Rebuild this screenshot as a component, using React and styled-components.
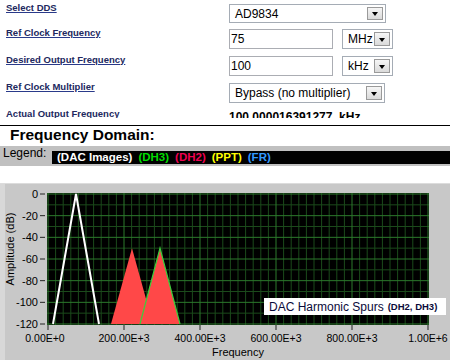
import React from "react";
import styled, { createGlobalStyle } from "styled-components";

const Global = createGlobalStyle`
  html, body { margin: 0; padding: 0; background: #fff; }
  body { font-family: "Liberation Sans", Arial, sans-serif; width: 450px; height: 361px; overflow: hidden; }
`;

const Page = styled.div`
  width: 450px;
  height: 361px;
  display: flex;
  flex-direction: column;
  overflow: hidden;
`;

const Form = styled.div`
  height: 118px;
  overflow: hidden;
  box-sizing: border-box;
  padding: 2px 0 0 6px;
  display: grid;
  grid-template-columns: 223px 1fr;
  grid-template-rows: 25px 27px 27px 27px auto;
`;

const Label = styled.a`
  align-self: start;
  font-size: 9.5px;
  line-height: 11px;
  font-weight: bold;
  color: #22285e;
  text-decoration: underline;
  text-decoration-color: #2a3a8a;
  cursor: pointer;
`;

const Cell = styled.div`
  align-self: start;
  margin-top: 2px;
  display: flex;
  gap: 9px;
`;

const Input = styled.div`
  box-sizing: border-box;
  width: ${(p) => p.$w}px;
  height: 20px;
  border: 1px solid #abadb3;
  background: #fff;
  padding-left: 1px;
  font-size: 12px;
  line-height: 18px;
  color: #000;
`;

const Select = styled.div`
  box-sizing: border-box;
  width: ${(p) => p.$w}px;
  height: ${(p) => p.$h || 19}px;
  border: 1px solid #a5acb5;
  background: #fff;
  padding: 2px 2px 2px 5px;
  display: flex;
  align-items: center;
  justify-content: space-between;
  font-size: 12px;
  color: #000;
`;

const DropButton = styled.span`
  box-sizing: border-box;
  width: 16px;
  height: 100%;
  border: 1px solid #9a9a9a;
  background: linear-gradient(#f6f6f6, #dadada);
  display: flex;
  align-items: center;
  justify-content: center;
  &::after {
    content: "";
    border-left: 3.5px solid transparent;
    border-right: 3.5px solid transparent;
    border-top: 4px solid #000;
    margin-top: 1px;
  }
`;

const Result = styled.div`
  font-size: 12px;
  line-height: 14px;
  font-weight: bold;
  color: #000;
  white-space: pre;
`;

const Divider = styled.div`
  margin-top: 7px;
  height: 1px;
  background: #000;
`;

const Heading = styled.h2`
  margin: 0 0 2px 10px;
  font-size: 15.5px;
  line-height: 18px;
  font-weight: bold;
  color: #000;
`;

const LegendBar = styled.div`
  height: 20px;
  background: #c0c0c0;
  display: flex;
  align-items: flex-start;
  padding-left: 3px;
`;

const LegendLabel = styled.span`
  font-size: 12px;
  line-height: 14px;
  color: #000;
  width: 49px;
`;

const LegendBox = styled.div`
  flex: 1;
  margin-top: 5px;
  height: 13px;
  background: #000;
  display: flex;
  gap: 6px;
  padding-left: 5px;
`;

const LegendItem = styled.span`
  font-size: 11.5px;
  line-height: 13px;
  font-weight: bold;
  color: ${(p) => p.$c};
`;

const ChartPanel = styled.div`
  margin-top: 17px;
  position: relative;
  height: 177px;
  background: linear-gradient(to right, #d8d8d8 0 5px, #c8c8c8 5px);
  border-top: 1px solid #dcdcdc;
  box-sizing: border-box;
`;

const Annotation = styled.div`
  position: absolute;
  left: 264px;
  top: 114px;
  width: 182px;
  height: 17px;
  box-sizing: border-box;
  background: #fff;
  padding-left: 5px;
  display: flex;
  align-items: center;
  gap: 4px;
  font-size: 12px;
  color: #0a0a3a;
  white-space: nowrap;
`;

const Small = styled.span`
  font-size: 9.5px;
  font-weight: bold;
`;

const X0 = 48, X1 = 428, Y0 = 10, Y1 = 140;
const yOf = (db) => Y0 + (-db / 120) * (Y1 - Y0);

function Chart() {
  const verticals = [];
  for (let i = 0; i <= 50; i++) verticals.push({ x: X0 + i * 7.6, major: i % 10 === 0 });
  const horizontals = [];
  for (let j = 0; j <= 12; j++) horizontals.push({ y: Y0 + j * ((Y1 - Y0) / 12), major: j % 2 === 0 });
  const yTicks = [0, -20, -40, -60, -80, -100, -120];
  const xTicks = ["0.00E+0", "200.00E+3", "400.00E+3", "600.00E+3", "800.00E+3", "1.00E+6"];
  const p = yOf(-50);
  return (
    <svg width="450" height="176" style={{ display: "block" }} fontFamily="Liberation Sans, Arial, sans-serif">
      <defs>
        <clipPath id="plot">
          <rect x="47" y="9" width="382" height="132" />
        </clipPath>
      </defs>
      <rect x="47" y="9" width="382" height="132" fill="#000" />
      <g clipPath="url(#plot)">
        {verticals.filter((v) => !v.major).map((v, i) => (
          <line key={"v" + i} x1={v.x} x2={v.x} y1="9" y2="141" stroke="#1b4a1b" strokeWidth="1" />
        ))}
        {horizontals.filter((h) => !h.major).map((h, i) => (
          <line key={"h" + i} x1="47" x2="429" y1={h.y} y2={h.y} stroke="#1b4a1b" strokeWidth="1" />
        ))}
        {verticals.filter((v) => v.major).map((v, i) => (
          <line key={"V" + i} x1={v.x} x2={v.x} y1="9" y2="141" stroke="#2c7a2c" strokeWidth="1" />
        ))}
        {horizontals.filter((h) => h.major).map((h, i) => (
          <line key={"H" + i} x1="47" x2="429" y1={h.y} y2={h.y} stroke="#2c7a2c" strokeWidth="1" />
        ))}
        <polygon points={`111,140 132,${p} 153,140`} fill="#ff4848" />
        <polygon points={`140,140 160,${p} 180,140`} fill="#ff4848" />
        <polyline points={`140,140 160,${p} 180,140`} fill="none" stroke="#3ccf3c" strokeWidth="1.2" />
        <polyline points={`53,140 76,10 99,140`} fill="none" stroke="#fff" strokeWidth="2" />
      </g>
      {yTicks.map((v) => (
        <g key={v}>
          <line x1="40" x2="45" y1={yOf(v)} y2={yOf(v)} stroke="#222" />
          <text x="38" y={yOf(v) + 4} fontSize="11" textAnchor="end" fill="#000">{v}</text>
        </g>
      ))}
      {xTicks.map((t, i) => (
        <g key={t}>
          <line x1={X0 + i * 76} x2={X0 + i * 76} y1="141" y2="146" stroke="#222" />
          <text x={i === 0 ? 45 : X0 + i * 76} y="157.5" fontSize="10.5" textAnchor="middle" fill="#000">{t}</text>
        </g>
      ))}
      <text x="238" y="172" fontSize="11" textAnchor="middle" fill="#000">Frequency</text>
      <text transform="translate(13.5,65) rotate(-90)" fontSize="11" textAnchor="middle" fill="#000">Amplitude (dB)</text>
    </svg>
  );
}

export default function App() {
  return (
    <Page>
      <Global />
      <Form>
        <Label>Select DDS</Label>
        <Cell>
          <Select $w={157} $h={19}>AD9834<DropButton /></Select>
        </Cell>
        <Label>Ref Clock Frequency</Label>
        <Cell>
          <Input $w={104}>75</Input>
          <Select $w={51} $h={20}>MHz<DropButton /></Select>
        </Cell>
        <Label>Desired Output Frequency</Label>
        <Cell>
          <Input $w={104}>100</Input>
          <Select $w={51} $h={20}>kHz<DropButton /></Select>
        </Cell>
        <Label>Ref Clock Multiplier</Label>
        <Cell>
          <Select $w={156} $h={20}>Bypass (no multiplier)<DropButton /></Select>
        </Cell>
        <Label>Actual Output Frequency</Label>
        <Cell>
          <Result>{"100.000016391277  kHz"}</Result>
        </Cell>
      </Form>
      <Divider />
      <Heading>Frequency Domain:</Heading>
      <LegendBar>
        <LegendLabel>Legend:</LegendLabel>
        <LegendBox>
          <LegendItem $c="#ffffff">(DAC Images)</LegendItem>
          <LegendItem $c="#00dc00">(DH3)</LegendItem>
          <LegendItem $c="#ee0050">(DH2)</LegendItem>
          <LegendItem $c="#ffff00">(PPT)</LegendItem>
          <LegendItem $c="#3399ff">(FR)</LegendItem>
        </LegendBox>
      </LegendBar>
      <ChartPanel>
        <Chart />
        <Annotation>
          DAC Harmonic Spurs<Small>(DH2, DH3)</Small>
        </Annotation>
      </ChartPanel>
    </Page>
  );
}
